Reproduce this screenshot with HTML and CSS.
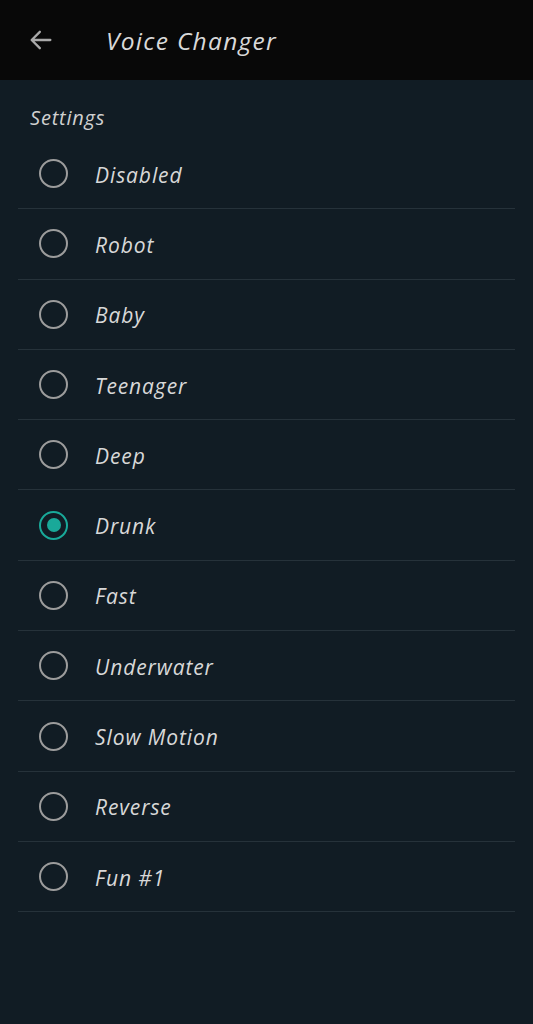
FILE: index.html
```html
<!DOCTYPE html>
<html lang="en">
<head>
<meta charset="UTF-8">
<meta name="viewport" content="width=device-width, initial-scale=1.0">
<title>Voice Changer</title>
<link rel="stylesheet" href="styles.css">
</head>
<body>
<header class="toolbar">
  <button class="back-btn" type="button" aria-label="Back">
    <svg width="28" height="28" viewBox="0 0 24 24"><path d="M20 12H5M11 5l-7 7 7 7" fill="none" stroke="#a9a9a9" stroke-width="2" stroke-linecap="round" stroke-linejoin="round"/></svg>
  </button>
  <h1 class="title">Voice Changer</h1>
</header>

<div class="section-label">Settings</div>

<ul class="options" id="options"></ul>

<script>
  const effects = [
    "Disabled",
    "Robot",
    "Baby",
    "Teenager",
    "Deep",
    "Drunk",
    "Fast",
    "Underwater",
    "Slow Motion",
    "Reverse",
    "Fun #1"
  ];
  let selected = "Drunk";

  const list = document.getElementById("options");

  function render() {
    list.innerHTML = "";
    for (const name of effects) {
      const li = document.createElement("li");
      li.className = "option" + (name === selected ? " checked" : "");
      li.innerHTML = `<span class="radio"></span><span class="label">${name}</span>`;
      li.addEventListener("click", () => { selected = name; render(); });
      list.appendChild(li);
    }
  }

  render();
</script>
</body>
</html>
```
FILE: styles.css
```css
body {
  margin: 0;
  background: #111c24;
  font-family: "Open Sans", sans-serif;
  font-style: italic;
  color: #d6d6d6;
}
.toolbar {
  height: 80px;
  background: #080808;
  display: flex;
  align-items: center;
}
.back-btn {
  background: none;
  border: none;
  padding: 0;
  margin-left: 27px;
  width: 28px;
  height: 28px;
  cursor: pointer;
}
.title {
  margin: 0 0 0 51px;
  font-size: 24.5px;
  font-weight: 500;
  letter-spacing: 1.3px;
  color: #d9d9d9;
}
.section-label {
  height: 59px;
  box-sizing: border-box;
  padding: 24px 0 0 30px;
  font-size: 20px;
  font-weight: 500;
  letter-spacing: 0.8px;
  color: #d0d0d0;
}
.options {
  list-style: none;
  margin: 0 18px;
  padding: 0;
}
.option {
  height: 70.3px;
  box-sizing: border-box;
  border-bottom: 1px solid #26323a;
  display: flex;
  align-items: center;
  cursor: pointer;
}
.radio {
  width: 29px;
  height: 29px;
  box-sizing: border-box;
  border: 2.5px solid #9c9c9c;
  border-radius: 50%;
  margin-left: 21px;
  display: flex;
  align-items: center;
  justify-content: center;
}
.option.checked .radio {
  border-color: #19a999;
}
.option.checked .radio::after {
  content: "";
  width: 14px;
  height: 14px;
  border-radius: 50%;
  background: #19a999;
}
.label {
  margin-left: 27px;
  font-size: 21px;
  font-weight: 500;
  letter-spacing: 0.9px;
  color: #d8d8d8;
  margin-top: 2px;
}
```
